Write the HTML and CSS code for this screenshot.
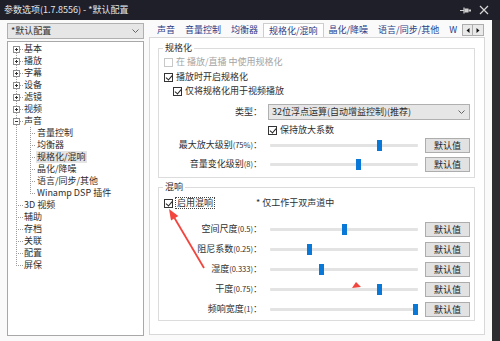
FILE: index.html
```html
<!DOCTYPE html>
<html lang="zh-CN">
<head>
    <meta charset="UTF-8">
    <meta name="viewport" content="width=device-width, initial-scale=1.0">
    <title>参数选项</title>
    <link rel="stylesheet" href="styles.css">
</head>
<body>
<div class="window">
    <div class="titlebar">
        <span class="title">参数选项(1.7.8556) - *默认配置</span>
        <span class="title-icons">
            <svg class="pin" width="11" height="7" viewBox="0 0 11 7"><path d="M0 3.5h4" stroke="#cfcfcf" stroke-width="1"/><path d="M4 0.5v6" stroke="#cfcfcf" stroke-width="1.2"/><rect x="4.5" y="1.5" width="4" height="4" fill="#cfcfcf"/><rect x="8.5" y="2.5" width="2.5" height="2" fill="#cfcfcf"/></svg>
            <svg class="close" width="10" height="10" viewBox="0 0 10 10"><path d="M1 1l8 8M9 1l-8 8" stroke="#d6d6d6" stroke-width="1.2"/></svg>
        </span>
    </div>

    <div class="body">
        <div class="side">
            <div class="combo">*默认配置<svg class="chev" width="7" height="4" viewBox="0 0 7 4"><path d="M0.5 0.5l3 3 3-3" fill="none" stroke="#666"/></svg></div>
            <div class="tree">
                <div class="node"><span class="twig first"><i class="box plus"></i></span>基本</div>
                <div class="node"><span class="twig"><i class="box plus"></i></span>播放</div>
                <div class="node"><span class="twig"><i class="box plus"></i></span>字幕</div>
                <div class="node"><span class="twig"><i class="box plus"></i></span>设备</div>
                <div class="node"><span class="twig"><i class="box plus"></i></span>滤镜</div>
                <div class="node"><span class="twig"><i class="box plus"></i></span>视频</div>
                <div class="node"><span class="twig"><i class="box"></i></span>声音</div>
                <div class="node"><span class="twig child"></span>音量控制</div>
                <div class="node"><span class="twig child"></span>均衡器</div>
                <div class="node sel"><span class="twig child"></span><span class="label">规格化/混响</span></div>
                <div class="node"><span class="twig child"></span>晶化/降噪</div>
                <div class="node"><span class="twig child"></span>语言/同步/其他</div>
                <div class="node"><span class="twig child last"></span>Winamp DSP 插件</div>
                <div class="node"><span class="twig"></span>3D 视频</div>
                <div class="node"><span class="twig"></span>辅助</div>
                <div class="node"><span class="twig"></span>存档</div>
                <div class="node"><span class="twig"></span>关联</div>
                <div class="node"><span class="twig"></span>配置</div>
                <div class="node"><span class="twig last"></span>屏保</div>
            </div>
        </div>

        <div class="main">
            <div class="tabbar">
                <div class="tabs">
                    <span class="tab">声音</span>
                    <span class="tab">音量控制</span>
                    <span class="tab">均衡器</span>
                    <span class="tab active">规格化/混响</span>
                    <span class="tab">晶化/降噪</span>
                    <span class="tab">语言/同步/其他</span>
                    <span class="tab">W</span>
                </div>
                <div class="tab-scroll">
                    <span class="arrow"><svg width="4" height="5" viewBox="0 0 4 5"><path d="M3.5 0v5L0.5 2.5z" fill="#111"/></svg></span>
                    <span class="arrow"><svg width="4" height="5" viewBox="0 0 4 5"><path d="M0.5 0v5l3-2.5z" fill="#111"/></svg></span>
                </div>
            </div>

            <div class="panel">
                <fieldset class="group">
                    <legend>规格化</legend>
                    <div class="check-row disabled first"><span class="cb"></span>在 播放/直播 中使用规格化</div>
                    <div class="check-row first"><span class="cb on"></span>播放时开启规格化</div>
                    <div class="check-row indent"><span class="cb on"></span>仅将规格化用于视频播放</div>
                    <div class="field-row type-row">
                        <span class="field-label">类型：</span>
                        <div class="select">32位浮点运算(自动增益控制)(推荐)<svg class="chev" width="7" height="4" viewBox="0 0 7 4"><path d="M0.5 0.5l3 3 3-3" fill="none" stroke="#666"/></svg></div>
                    </div>
                    <div class="check-row keep"><span class="cb on"></span>保持放大系数</div>
                    <div class="sliders">
                        <div class="field-row">
                            <span class="field-label">最大放大级别<small>(75%)</small>：</span>
                            <div class="track"><span class="thumb" style="--v: 0.745"></span></div>
                            <button class="btn">默认值</button>
                        </div>
                        <div class="field-row">
                            <span class="field-label">音量变化级别<small>(8)</small>：</span>
                            <div class="track"><span class="thumb" style="--v: 0.6"></span></div>
                            <button class="btn">默认值</button>
                        </div>
                    </div>
                </fieldset>

                <fieldset class="group reverb">
                    <legend>混响</legend>
                    <div class="check-row"><span class="cb on"></span><span class="focus">启用混响</span><span class="note">* 仅工作于双声道中</span></div>
                    <div class="sliders reverb-sliders">
                        <div class="field-row">
                            <span class="field-label">空间尺度<small>(0.5)</small>：</span>
                            <div class="track"><span class="thumb" style="--v: 0.5"></span></div>
                            <button class="btn">默认值</button>
                        </div>
                        <div class="field-row">
                            <span class="field-label">阻尼系数<small>(0.25)</small>：</span>
                            <div class="track"><span class="thumb" style="--v: 0.26"></span></div>
                            <button class="btn">默认值</button>
                        </div>
                        <div class="field-row">
                            <span class="field-label">湿度<small>(0.333)</small>：</span>
                            <div class="track"><span class="thumb" style="--v: 0.34"></span></div>
                            <button class="btn">默认值</button>
                        </div>
                        <div class="field-row">
                            <span class="field-label">干度<small>(0.75)</small>：</span>
                            <div class="track"><span class="thumb" style="--v: 0.745"></span></div>
                            <button class="btn">默认值</button>
                        </div>
                        <div class="field-row">
                            <span class="field-label">频响宽度<small>(1)</small>：</span>
                            <div class="track"><span class="thumb" style="--v: 1"></span></div>
                            <button class="btn">默认值</button>
                        </div>
                    </div>
                </fieldset>
            </div>
        </div>

        <div class="edge"></div>
    </div>

    <!-- red annotation drawn on top of the screenshot -->
    <svg class="annot" width="500" height="341" viewBox="0 0 500 341">
        <path d="M204 268L174.5 218" stroke="#f2453d" stroke-width="1.8"/>
        <polygon points="169,209 178.3,216 171,220.6" fill="#f2453d"/>
        <polygon points="352,288 356,282 361,287" fill="#f2453d"/>
    </svg>
</div>
</body>
</html>
```

FILE: styles.css
```css
* {
    box-sizing: border-box;
}

body {
    margin: 0;
    font-family: "Noto Sans CJK SC", "Noto Sans", sans-serif;
    font-size: 9px;
    line-height: 12px;
    color: #2e2e2e;
    background: #fafafa;
}

.window {
    position: relative;
    width: 500px;
    height: 341px;
    overflow: hidden;
}

/* title bar */
.titlebar {
    height: 20px;
    background: #1f1f29;
    color: #e6e6e6;
    display: flex;
    align-items: center;
    padding: 0 11px 0 4px;
}

.title {
    flex: 1;
    font-size: 9px;
}

.title-icons {
    display: flex;
    align-items: center;
    gap: 8px;
}

.body {
    display: flex;
    height: 321px;
}

/* left column */
.side {
    width: 137px;
    margin-left: 7px;
    padding: 3px 0 5px;
    display: flex;
    flex-direction: column;
}

.combo {
    height: 16px;
    border: 1px solid #b0b0b0;
    background: #e6e6e6;
    padding-left: 3px;
    line-height: 14px;
    display: flex;
    align-items: center;
    justify-content: space-between;
    padding-right: 4px;
}

.tree {
    flex: 1;
    margin-top: 2px;
    border: 1px solid #a8a8a8;
    background: #fff;
    padding-top: 1px;
}

.node {
    height: 12px;
    display: flex;
    align-items: center;
    white-space: nowrap;
}

.twig {
    position: relative;
    width: 16px;
    height: 12px;
    flex: none;
    background-image:
        repeating-linear-gradient(to bottom, #9c9c9c 0 1px, transparent 1px 2px),
        repeating-linear-gradient(to right, #9c9c9c 0 1px, transparent 1px 2px);
    background-size: 1px 12px, 7px 1px;
    background-position: 8px 0, 8px 6px;
    background-repeat: no-repeat;
}

.twig.first {
    background-size: 1px 6px, 7px 1px;
    background-position: 8px 6px, 8px 6px;
}

.twig.last {
    background-size: 1px 7px, 7px 1px;
}

.twig.child {
    width: 29px;
    background-image:
        repeating-linear-gradient(to bottom, #9c9c9c 0 1px, transparent 1px 2px),
        repeating-linear-gradient(to bottom, #9c9c9c 0 1px, transparent 1px 2px),
        repeating-linear-gradient(to right, #9c9c9c 0 1px, transparent 1px 2px);
    background-size: 1px 12px, 1px 12px, 6px 1px;
    background-position: 8px 0, 22px 0, 22px 6px;
}

.twig.child.last {
    background-size: 1px 12px, 1px 7px, 6px 1px;
}

.box {
    position: absolute;
    left: 5px;
    top: 3px;
    width: 7px;
    height: 7px;
    border: 1px solid #8e8e8e;
    background: #fff;
}

.box::before {
    content: "";
    position: absolute;
    left: 1px;
    top: 2px;
    width: 3px;
    height: 1px;
    background: #333;
}

.box.plus::after {
    content: "";
    position: absolute;
    left: 2px;
    top: 1px;
    width: 1px;
    height: 3px;
    background: #333;
}

.node.sel .label {
    background: #e4e4e4;
    padding: 0 1px;
    margin-left: -1px;
}

/* right column */
.main {
    width: 336px;
    margin-left: 5px;
    padding: 2px 0 6px;
    display: flex;
    flex-direction: column;
}

.tabbar {
    height: 15px;
    display: flex;
    align-items: flex-end;
}

.tabs {
    flex: 1;
    display: flex;
    align-items: flex-end;
    overflow: hidden;
    white-space: nowrap;
    padding-left: 3px;
}

.tab {
    padding: 0 5px;
    height: 13px;
    line-height: 12px;
    color: #2b3d88;
    flex: none;
}

.tab.active {
    position: relative;
    z-index: 1;
    height: 15px;
    line-height: 14px;
    border: 1px solid #cdcdcd;
    border-bottom: none;
    background: #fff;
    margin-bottom: -1px;
}

.tab-scroll {
    display: flex;
    align-self: flex-start;
    margin: 2px 1px 0 0;
}

.arrow {
    width: 11px;
    height: 12px;
    border: 1px solid #adadad;
    background: #e9e9e9;
    display: flex;
    align-items: center;
    justify-content: center;
}

.arrow + .arrow {
    border-left: none;
}

.panel {
    flex: 1;
    border: 1px solid #d8d8d8;
    background: #fff;
    padding: 4px 9px 0 8px;
}

/* group boxes */
.group {
    margin: 0;
    padding: 0 0 5px;
    border: 1px solid #dcdcdc;
    min-width: 0;
}

.group legend {
    margin-left: 4px;
    padding: 0 2px;
    line-height: 12px;
}

.reverb {
    margin-top: 3px;
    padding-bottom: 3px;
}

.check-row {
    height: 14px;
    display: flex;
    align-items: center;
    padding-left: 5px;
    white-space: nowrap;
}

.check-row.first {
    margin-top: 1px;
}

.check-row.indent {
    padding-left: 14px;
}

.check-row.keep {
    margin-top: 3px;
    padding-left: 109px;
}

.reverb .check-row {
    margin-top: 3px;
}

.cb {
    position: relative;
    width: 9px;
    height: 9px;
    border: 1px solid #333;
    background: #fff;
    margin-right: 3px;
    flex: none;
}

.cb.on::after {
    content: "";
    position: absolute;
    left: 2px;
    top: 0;
    width: 3px;
    height: 5px;
    border: solid #222;
    border-width: 0 1px 1px 0;
    transform: rotate(40deg);
}

.disabled {
    color: #a4a4a4;
}

.disabled .cb {
    border-color: #c8c8c8;
}

.focus {
    border: 1px dotted #444;
    padding: 0 1px;
    line-height: 10px;
    margin-left: -1px;
}

.note {
    margin-left: 41px;
}

.field-row {
    height: 16px;
    display: flex;
    align-items: center;
}

.type-row {
    margin-top: 6px;
}

.field-label {
    width: 103px;
    text-align: right;
    white-space: nowrap;
}

.field-label small {
    font-size: 7.5px;
}

.select {
    width: 202px;
    height: 16px;
    margin-left: 6px;
    border: 1px solid #b0b0b0;
    background: #e6e6e6;
    padding: 0 4px 0 3px;
    display: flex;
    align-items: center;
    justify-content: space-between;
    white-space: nowrap;
}

.sliders {
    display: flex;
    flex-direction: column;
    gap: 3px;
}

.reverb-sliders {
    gap: 4px;
    margin-top: 11px;
}

.track {
    position: relative;
    width: 148px;
    height: 3px;
    margin-left: 8px;
    background: #e3e3e3;
    border-radius: 1px;
}

.thumb {
    position: absolute;
    top: -4px;
    left: calc(var(--v) * (100% - 5px));
    width: 5px;
    height: 11px;
    background: #0a78d6;
}

.btn {
    width: 45px;
    height: 15px;
    margin-left: 7px;
    padding: 0;
    border: 1px solid #adadad;
    background: #e2e2e2;
    font-family: inherit;
    font-size: 9px;
    line-height: 13px;
    color: #222;
}

.edge {
    margin-left: auto;
    width: 8px;
    background: #2c2c31;
}

.annot {
    position: absolute;
    top: 0;
    left: 0;
    pointer-events: none;
}
```
